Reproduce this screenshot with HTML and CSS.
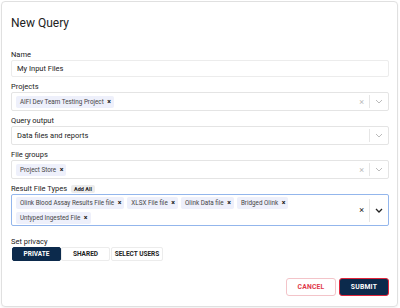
FILE: index.html
```html
<!DOCTYPE html>
<html lang="en">
<head>
    <meta charset="UTF-8">
    <title>New Query</title>
    <link rel="stylesheet" href="styles.css">
</head>
<body>
    <div class="dialog">
        <h1 class="dialog-title">New Query</h1>
        <div class="field">
            <label class="label">Name</label>
            <div class="input">My Input Files</div>
        </div>
        <div class="field">
            <label class="label">Projects</label>
            <div class="select">
                <div class="values">
                    <span class="chip">AIFI Dev Team Testing Project <b>×</b></span>
                </div>
                <span class="clear">×</span>
                <span class="sep"></span>
                <span class="chev"><svg width="8" height="5" viewBox="0 0 8 5"><path d="M1 1l3 3 3-3" fill="none" stroke="currentColor" stroke-width="1"/></svg></span>
            </div>
        </div>
        <div class="field">
            <label class="label">Query output</label>
            <div class="select">
                <div class="values"><span class="text">Data files and reports</span></div>
                <span class="sep"></span>
                <span class="chev"><svg width="8" height="5" viewBox="0 0 8 5"><path d="M1 1l3 3 3-3" fill="none" stroke="currentColor" stroke-width="1"/></svg></span>
            </div>
        </div>
        <div class="field">
            <label class="label">File groups</label>
            <div class="select">
                <div class="values">
                    <span class="chip">Project Store <b>×</b></span>
                </div>
                <span class="clear">×</span>
                <span class="sep"></span>
                <span class="chev"><svg width="8" height="5" viewBox="0 0 8 5"><path d="M1 1l3 3 3-3" fill="none" stroke="currentColor" stroke-width="1"/></svg></span>
            </div>
        </div>
        <div class="field">
            <label class="label">Result File Types <span class="add-all">Add All</span></label>
            <div class="select focused">
                <div class="values">
                    <span class="chip">Olink Blood Assay Results File file <b>×</b></span>
                    <span class="chip">XLSX File file <b>×</b></span>
                    <span class="chip">Olink Data file <b>×</b></span>
                    <span class="chip">Bridged Olink <b>×</b></span>
                    <span class="chip">Untyped Ingested File <b>×</b></span>
                </div>
                <span class="clear dark">×</span>
                <span class="sep"></span>
                <span class="chev dark"><svg width="8" height="5" viewBox="0 0 8 5"><path d="M1 1l3 3 3-3" fill="none" stroke="currentColor" stroke-width="1.3"/></svg></span>
            </div>
        </div>
        <div class="privacy">
            <label class="label">Set privacy</label>
            <div class="toggle">
                <button class="toggle-btn active">PRIVATE</button>
                <button class="toggle-btn">SHARED</button>
                <button class="toggle-btn">SELECT USERS</button>
            </div>
        </div>
        <div class="actions">
            <button class="btn cancel">CANCEL</button>
            <button class="btn submit">SUBMIT</button>
        </div>
    </div>
</body>
</html>
```

FILE: styles.css
```css
body {
    margin: 0;
    padding: 1px;
    font-family: Roboto, "Liberation Sans", sans-serif;
    background-color: #fff;
    color: #222;
}

.dialog {
    width: 397px;
    height: 306px;
    box-sizing: border-box;
    border: 1px solid #e0e0e0;
    border-radius: 4px;
    padding: 14px 8px 0 9px;
    box-shadow: 0 1px 2px rgba(0, 0, 0, 0.06);
}

.dialog-title {
    margin: 0 0 19px 0;
    font-size: 12px;
    font-weight: 400;
    line-height: 15px;
}

.field {
    margin-bottom: 5px;
}

.label {
    display: flex;
    align-items: center;
    gap: 4px;
    font-size: 7.5px;
    line-height: 10px;
    color: #222;
}

.add-all {
    background-color: #ececec;
    border-radius: 2px;
    font-size: 5.5px;
    font-weight: 700;
    padding: 0 3px;
    line-height: 8px;
}

.input {
    height: 17px;
    box-sizing: border-box;
    border: 1px solid #ececec;
    border-radius: 2px;
    padding: 0 5px;
    font-size: 7.5px;
    line-height: 15px;
}

.select {
    display: flex;
    align-items: center;
    height: 19px;
    box-sizing: border-box;
    border: 1px solid #e4e4e4;
    border-radius: 2px;
    padding: 0 0 0 4px;
}

.select.focused {
    height: 32px;
    border-color: #93b6ec;
}

.values {
    flex: 1;
    display: flex;
    flex-wrap: wrap;
    gap: 3px 3px;
}

.text {
    font-size: 7.5px;
    padding-left: 1px;
    line-height: 15px;
}

.chip {
    background-color: #eef0fb;
    border-radius: 2px;
    font-size: 6.3px;
    line-height: 12px;
    padding: 0 3px 0 4px;
    color: #444;
}

.chip b {
    margin-left: 2px;
    font-size: 7px;
    color: #111;
}

.clear {
    color: #bbb;
    font-size: 9px;
    padding: 0 5px;
}

.sep {
    width: 1px;
    height: 13px;
    background-color: #e6e6e6;
}

.chev {
    display: flex;
    color: #bbb;
    padding: 0 5px 0 5px;
}

.clear.dark,
.chev.dark {
    color: #222;
}

.select.focused .sep {
    height: 23px;
}

.privacy {
    margin-top: 11px;
}

.privacy .label {
    line-height: 10px;
}

.toggle {
    display: flex;
}

.toggle-btn {
    font-family: inherit;
    font-size: 6.5px;
    font-weight: 700;
    height: 14px;
    padding: 0;
    background-color: #fff;
    border: 1px solid #ececec;
    border-radius: 2px;
    color: #222;
}

.toggle-btn:nth-child(1) { width: 49px; margin-left: 1px; }
.toggle-btn:nth-child(2) { width: 49px; }
.toggle-btn:nth-child(3) { width: 52px; margin-left: 1px; }

.toggle-btn.active {
    background-color: #0c2a4c;
    border-color: #0c2a4c;
    color: #fff;
}

.actions {
    display: flex;
    justify-content: flex-end;
    gap: 3px;
    margin-top: 17px;
}

.btn {
    font-family: inherit;
    font-size: 6.8px;
    font-weight: 700;
    width: 50px;
    height: 18px;
    border-radius: 3px;
    letter-spacing: 0.2px;
}

.cancel {
    background-color: #fff;
    border: 1px solid #f3c4c9;
    color: #e0394a;
}

.submit {
    background-color: #0c2a4c;
    border: 1.5px solid #e0243a;
    color: #fff;
}
```
